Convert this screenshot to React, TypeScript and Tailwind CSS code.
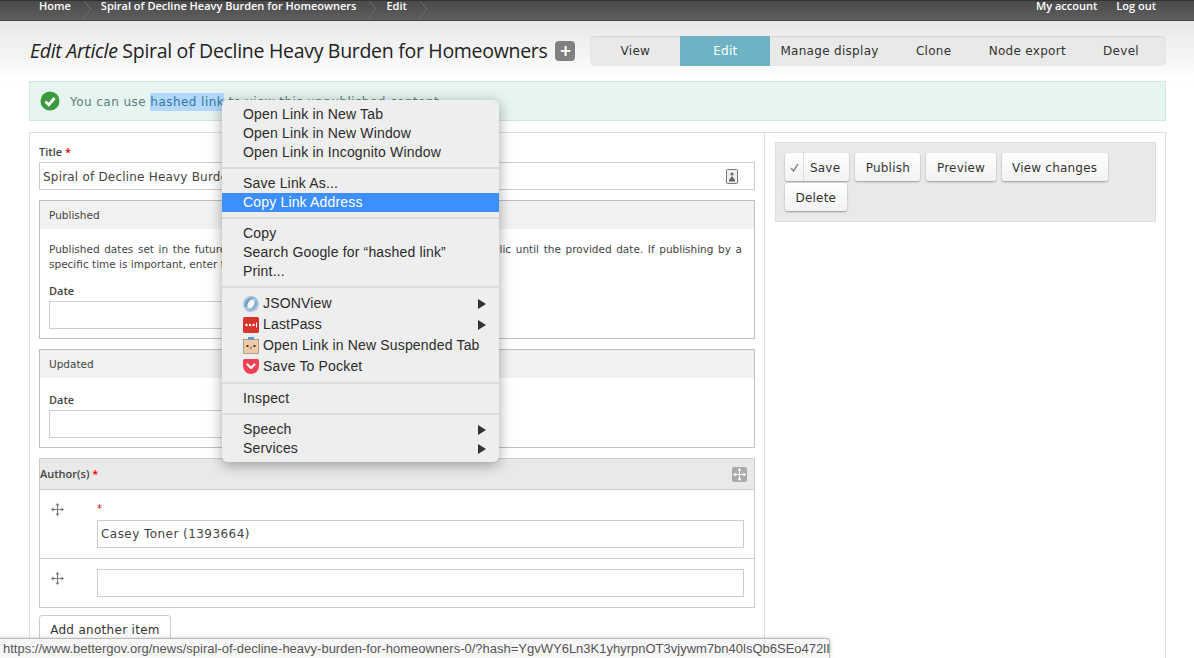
const uiFont = { fontFamily: '"DejaVu Sans", sans-serif' };
const labelFont = { fontFamily: '"Open Sans", sans-serif' };

const Chevron = () => (
  <svg width="14" height="21" viewBox="0 0 14 21" className="mx-[8px] shrink-0">
    <path d="M5 0 L12 8 L1 21" fill="none" stroke="#6e6e6e" strokeWidth="1" />
  </svg>
);

const DragIcon = ({ color = "#777" }: { color?: string }) => (
  <svg width="13" height="13" viewBox="0 0 13 13" fill={color}>
    <path d="M6 2h1v9H6zM2 6h9v1H2z" />
    <path d="M6.5 0 8.5 2.5h-4zM6.5 13l-2-2.5h4zM0 6.5 2.5 4.5v4zM13 6.5l-2.500-2v4z" />
  </svg>
);

const Arrow = () => (
  <svg width="8" height="10" viewBox="0 0 8 10" className="ml-auto mr-[5px]">
    <path d="M0 0 8 5 0 10z" fill="#333" />
  </svg>
);

const JsonIcon = () => (
  <svg width="16" height="16" viewBox="0 0 16 16">
    <circle cx="8" cy="8" r="8" fill="#a9c6de" />
    <path d="M2 11 C1 5 6 0 13 1.500 C8 2 4.500 5 4.500 11z" fill="#6f9cc2" />
    <path d="M14 5 C15 11 10 16 3 14.500 C8 14 11.500 11 11.500 5z" fill="#86aecd" />
    <ellipse cx="8" cy="8" rx="3" ry="4.500" transform="rotate(30 8 8)" fill="#f1f5f9" />
  </svg>
);

const LastPassIcon = () => (
  <svg width="16" height="16" viewBox="0 0 16 16">
    <rect width="16" height="16" rx="1.500" fill="#d8342c" />
    <circle cx="3.500" cy="8" r="1.200" fill="#fff" />
    <circle cx="7" cy="8" r="1.200" fill="#fff" />
    <circle cx="10.500" cy="8" r="1.200" fill="#fff" />
    <rect x="13" y="5.500" width="1" height="5" fill="#fff" />
  </svg>
);

const SuspendIcon = () => (
  <svg width="16" height="17" viewBox="0 0 16 17">
    <rect x="5" y="0" width="6" height="3" fill="#3f9fe0" />
    <rect x="0.300" y="2.500" width="15.400" height="14" fill="#efc9a8" stroke="#8d7a68" strokeWidth="0.600" />
    <rect x="3.500" y="8" width="2" height="2" fill="#333" />
    <rect x="10.500" y="8" width="2" height="2" fill="#333" />
    <rect x="7" y="10.500" width="2" height="1" fill="#555" />
  </svg>
);

const PocketIcon = () => (
  <svg width="16" height="15" viewBox="0 0 16 15">
    <path d="M1.500 0h13A1.500 1.500 0 0 1 16 1.500V7A8 8 0 0 1 0 7V1.500A1.500 1.500 0 0 1 1.500 0z" fill="#ef4056" />
    <path d="M4.500 5.500 8 9l3.500-3.500" fill="none" stroke="#fff" strokeWidth="2.200" strokeLinecap="round" strokeLinejoin="round" />
  </svg>
);

const MenuRow = ({ label, active, tall, icon, arrow }: { label: string; active?: boolean; tall?: boolean; icon?: React.ReactNode; arrow?: boolean }) => (
  <div className={`flex items-center pl-[21px] pr-[8px] gap-[4px] ${tall ? "h-[21px]" : "h-[19px]"} ${active ? "bg-[#3d8fff] text-white" : "text-[#2b2b2b]"}`}>
    {icon}
    <span>{label}</span>
    {arrow && <Arrow />}
  </div>
);

const MenuSep = () => (
  <div className="h-[12px] flex items-center">
    <div className="h-[2px] w-full bg-[#dcdcdc]" />
  </div>
);

const ContextMenu = () => (
  <div
    className="absolute left-[222px] top-[100px] w-[277px] h-[362px] pt-[5px] bg-[#eeeeee] rounded-[6px] shadow-[0_3px_14px_rgba(0,0,0,0.35)] text-[14px] tracking-[0.17px]"
    style={{ fontFamily: '"Liberation Sans", sans-serif' }}
  >
    <MenuRow label="Open Link in New Tab" />
    <MenuRow label="Open Link in New Window" />
    <MenuRow label="Open Link in Incognito Window" />
    <MenuSep />
    <MenuRow label="Save Link As..." />
    <MenuRow label="Copy Link Address" active />
    <MenuSep />
    <MenuRow label="Copy" />
    <MenuRow label="Search Google for “hashed link”" />
    <MenuRow label="Print..." />
    <MenuSep />
    <MenuRow label="JSONView" tall icon={<JsonIcon />} arrow />
    <MenuRow label="LastPass" tall icon={<LastPassIcon />} arrow />
    <MenuRow label="Open Link in New Suspended Tab" tall icon={<SuspendIcon />} />
    <MenuRow label="Save To Pocket" tall icon={<PocketIcon />} />
    <MenuSep />
    <MenuRow label="Inspect" />
    <MenuSep />
    <MenuRow label="Speech" arrow />
    <MenuRow label="Services" arrow />
  </div>
);

const Btn = ({ children }: { children: React.ReactNode }) => (
  <div className="h-[28px] px-[10.5px] pt-[1px] flex items-center bg-gradient-to-b from-white to-[#f2f2f2] rounded-[3px] shadow-[0_1px_2px_rgba(0,0,0,0.35)] text-[12px] text-[#333] tracking-[0.2px]">
    {children}
  </div>
);

const tabs = ["View", "Edit", "Manage display", "Clone", "Node export", "Devel"];

const App = () => {
  return (
    <div className="relative w-[1194px] h-[658px] overflow-hidden bg-white" style={uiFont}>
      {/* top bar */}
      <div
        className="h-[21px] bg-gradient-to-b from-[#4a4a4a] to-[#5e5e5e] border-t border-t-[#333] border-b border-b-[#444] flex items-start pl-[39px] pr-[38px] text-[11px] font-semibold text-white overflow-hidden"
        style={labelFont}
      >
        <div className="flex items-start leading-[9px] h-full">
          <span>Home</span>
          <Chevron />
          <span>Spiral of Decline Heavy Burden for Homeowners</span>
          <Chevron />
          <span>Edit</span>
          <Chevron />
        </div>
        <div className="ml-auto flex gap-[19px] leading-[9px]">
          <span>My account</span>
          <span>Log out</span>
        </div>
      </div>

      {/* page title + tabs */}
      <div className="h-[60px] bg-gradient-to-b from-[#e8e8e8] to-white flex items-center pl-[30px] pr-[28px]">
        <h1 className="text-[19.5px] text-[#222] tracking-[-0.3px] whitespace-nowrap" style={labelFont}>
          <em>Edit Article</em> Spiral of Decline Heavy Burden for Homeowners
        </h1>
        <div className="ml-[8px] w-[20px] h-[20px] rounded-[4px] bg-[#808080] text-white flex items-center justify-center text-[15px] font-bold leading-none">+</div>
        <div className="ml-auto flex h-[30px] bg-[#e9e9e9] rounded-[5px] overflow-hidden text-[12px] tracking-[0.3px] text-[#333] shadow-[inset_0_1px_1px_rgba(0,0,0,0.08)]">
          {tabs.map((t) => (
            <div key={t} className={`min-w-[90px] px-[10px] flex items-center justify-center ${t === "Edit" ? "bg-[#6db2c5] text-white" : ""}`}>
              {t}
            </div>
          ))}
        </div>
      </div>

      {/* status message */}
      <div className="mx-[29px] mr-[28px] h-[40px] bg-[#e6f5f0] border border-[#d3e6e0] flex items-center pl-[10px] text-[12px] text-[#5b7f7f] tracking-[0.45px]">
        <svg width="20" height="20" viewBox="0 0 20 20" className="mr-[10px] shrink-0">
          <circle cx="10" cy="10" r="9.500" fill="#3c9a3c" />
          <path d="M5.500 10.500 8.800 14 14.500 7" fill="none" stroke="#fff" strokeWidth="2.800" />
        </svg>
        <div className="flex pt-[1px]">
          <span>You can use&nbsp;</span>
          <span className="bg-[#b3d7fe] text-[#2f7a9a]">hashed link</span>
          <span>&nbsp;to view this unpublished content.</span>
        </div>
      </div>

      {/* form */}
      <div className="mx-[29px] mr-[28px] mt-[11px] h-[560px] border border-[#ddd] flex text-[#444]">
        <div className="w-[735px] shrink-0 border-r border-r-[#ddd] pl-[9px] pr-[9px] pt-[14px]">
          <div className="text-[11px] font-semibold leading-[10px] mb-[5px]" style={labelFont}>
            Title <span className="text-[#e00]">*</span>
          </div>
          <div className="h-[28px] border border-[#ccc] flex items-center pl-[3px] pr-[16px] text-[12px] tracking-[0.2px]">
            <span className="pt-[1px]">Spiral of Decline Heavy Burden for Homeowners</span>
            <svg width="12" height="15" viewBox="0 0 12 15" className="ml-auto">
              <rect x="0.500" y="0.500" width="11" height="14" rx="1" fill="#eee" stroke="#777" />
              <circle cx="6" cy="5" r="1.500" fill="#666" />
              <path d="M3 11 6 7l3 4z" fill="#666" />
              <rect x="3" y="11" width="6" height="1.500" fill="#666" />
            </svg>
          </div>

          <div className="mt-[10px] h-[139px] border border-[#bfbfbf]">
            <div className="h-[28px] pt-[1px] bg-[#f2f2f2] flex items-center pl-[9px] text-[10.5px]">Published</div>
            <div className="mt-[13px] pl-[9px] pr-[12px] text-[10.5px] leading-[15px]">
              <div className="[text-align-last:justify] whitespace-nowrap">
                Published dates set in the future will not be visible or available to the general public until the provided date. If publishing by a
              </div>
              <div>specific time is important, enter the date and time here for your records.</div>
            </div>
            <div className="mt-[14px] pl-[9px] text-[11px] font-semibold leading-[10px]" style={labelFont}>Date</div>
            <div className="mt-[5px] ml-[9px] w-[300px] h-[28px] border border-[#ccc]" />
          </div>

          <div className="mt-[10px] h-[99px] border border-[#bfbfbf]">
            <div className="h-[28px] pt-[1px] bg-[#f2f2f2] flex items-center pl-[9px] text-[10.5px]">Updated</div>
            <div className="mt-[17px] pl-[9px] text-[11px] font-semibold leading-[10px]" style={labelFont}>Date</div>
            <div className="mt-[5px] ml-[9px] w-[300px] h-[28px] border border-[#ccc]" />
          </div>

          <div className="mt-[10px] h-[150px] border border-[#ccc]">
            <div className="h-[31px] bg-[#e9e9e9] border-b border-b-[#ccc] flex items-center pl-[0px] pr-[7px] text-[11px] font-semibold" style={labelFont}>
              <span>Author(s) <span className="text-[#e00]">*</span></span>
              <div className="ml-auto w-[15px] h-[15px] rounded-[2px] bg-[#aaa] flex items-center justify-center">
                <DragIcon color="#fff" />
              </div>
            </div>
            <div className="h-[69px] border-b border-b-[#ccc] flex">
              <div className="w-[57px] shrink-0 pl-[11px] pt-[13px]"><DragIcon /></div>
              <div className="flex-1 pr-[10px]">
                <div className="h-[30px] pt-[14px] text-[10px] leading-[10px] text-[#e00]">*</div>
                <div className="h-[28px] border border-[#ccc] flex items-center pl-[3px] text-[12px] tracking-[0.45px]">Casey Toner (1393664)</div>
              </div>
            </div>
            <div className="flex">
              <div className="w-[57px] shrink-0 pl-[11px] pt-[13px]"><DragIcon /></div>
              <div className="flex-1 pr-[10px] pt-[10px]">
                <div className="h-[28px] border border-[#ccc]" />
              </div>
            </div>
          </div>

          <div className="mt-[7px] w-[132px] h-[30px] border border-[#ccc] rounded-[3px] flex items-center justify-center text-[12px] text-[#333] tracking-[0.3px]">
            Add another item
          </div>
        </div>

        <div className="flex-1 pl-[10px] pr-[9px] pt-[9px]">
          <div className="h-[80px] bg-[#e9e9e9] border border-[#ddd] pl-[9px] pt-[10px] flex flex-wrap content-start gap-x-[6px] gap-y-[2px]">
            <div className="h-[28px] flex items-center bg-gradient-to-b from-white to-[#f2f2f2] rounded-[3px] shadow-[0_1px_2px_rgba(0,0,0,0.35)] text-[12px] text-[#333] tracking-[0.2px]">
              <div className="w-[19px] h-full border-r border-r-[#ddd] flex items-center justify-center">
                <svg width="9" height="9" viewBox="0 0 9 9">
                  <path d="M1 5 3.500 8 8 1" fill="none" stroke="#8a8a8a" strokeWidth="1.500" />
                </svg>
              </div>
              <div className="pl-[6px] pr-[9px] pt-[1px]">Save</div>
            </div>
            <Btn>Publish</Btn>
            <Btn>Preview</Btn>
            <Btn>View changes</Btn>
            <Btn>Delete</Btn>
          </div>
        </div>
      </div>

      <ContextMenu />

      {/* link status bubble */}
      <div
        className="absolute left-0 bottom-0 w-[830px] h-[20px] bg-[#f7f7f7] border-t border-r border-[#bbb] rounded-tr-[4px] shadow-[0_0_4px_rgba(0,0,0,0.2)] pl-[3px] text-[13px] leading-[19px] text-[#555] whitespace-nowrap overflow-hidden"
        style={{ fontFamily: '"Liberation Sans", sans-serif' }}
      >
        https://www.bettergov.org/news/spiral-of-decline-heavy-burden-for-homeowners-0/?hash=YgvWY6Ln3K1yhyrpnOT3vjywm7bn40lsQb6SEo472lI
      </div>
    </div>
  );
};

export default App;
